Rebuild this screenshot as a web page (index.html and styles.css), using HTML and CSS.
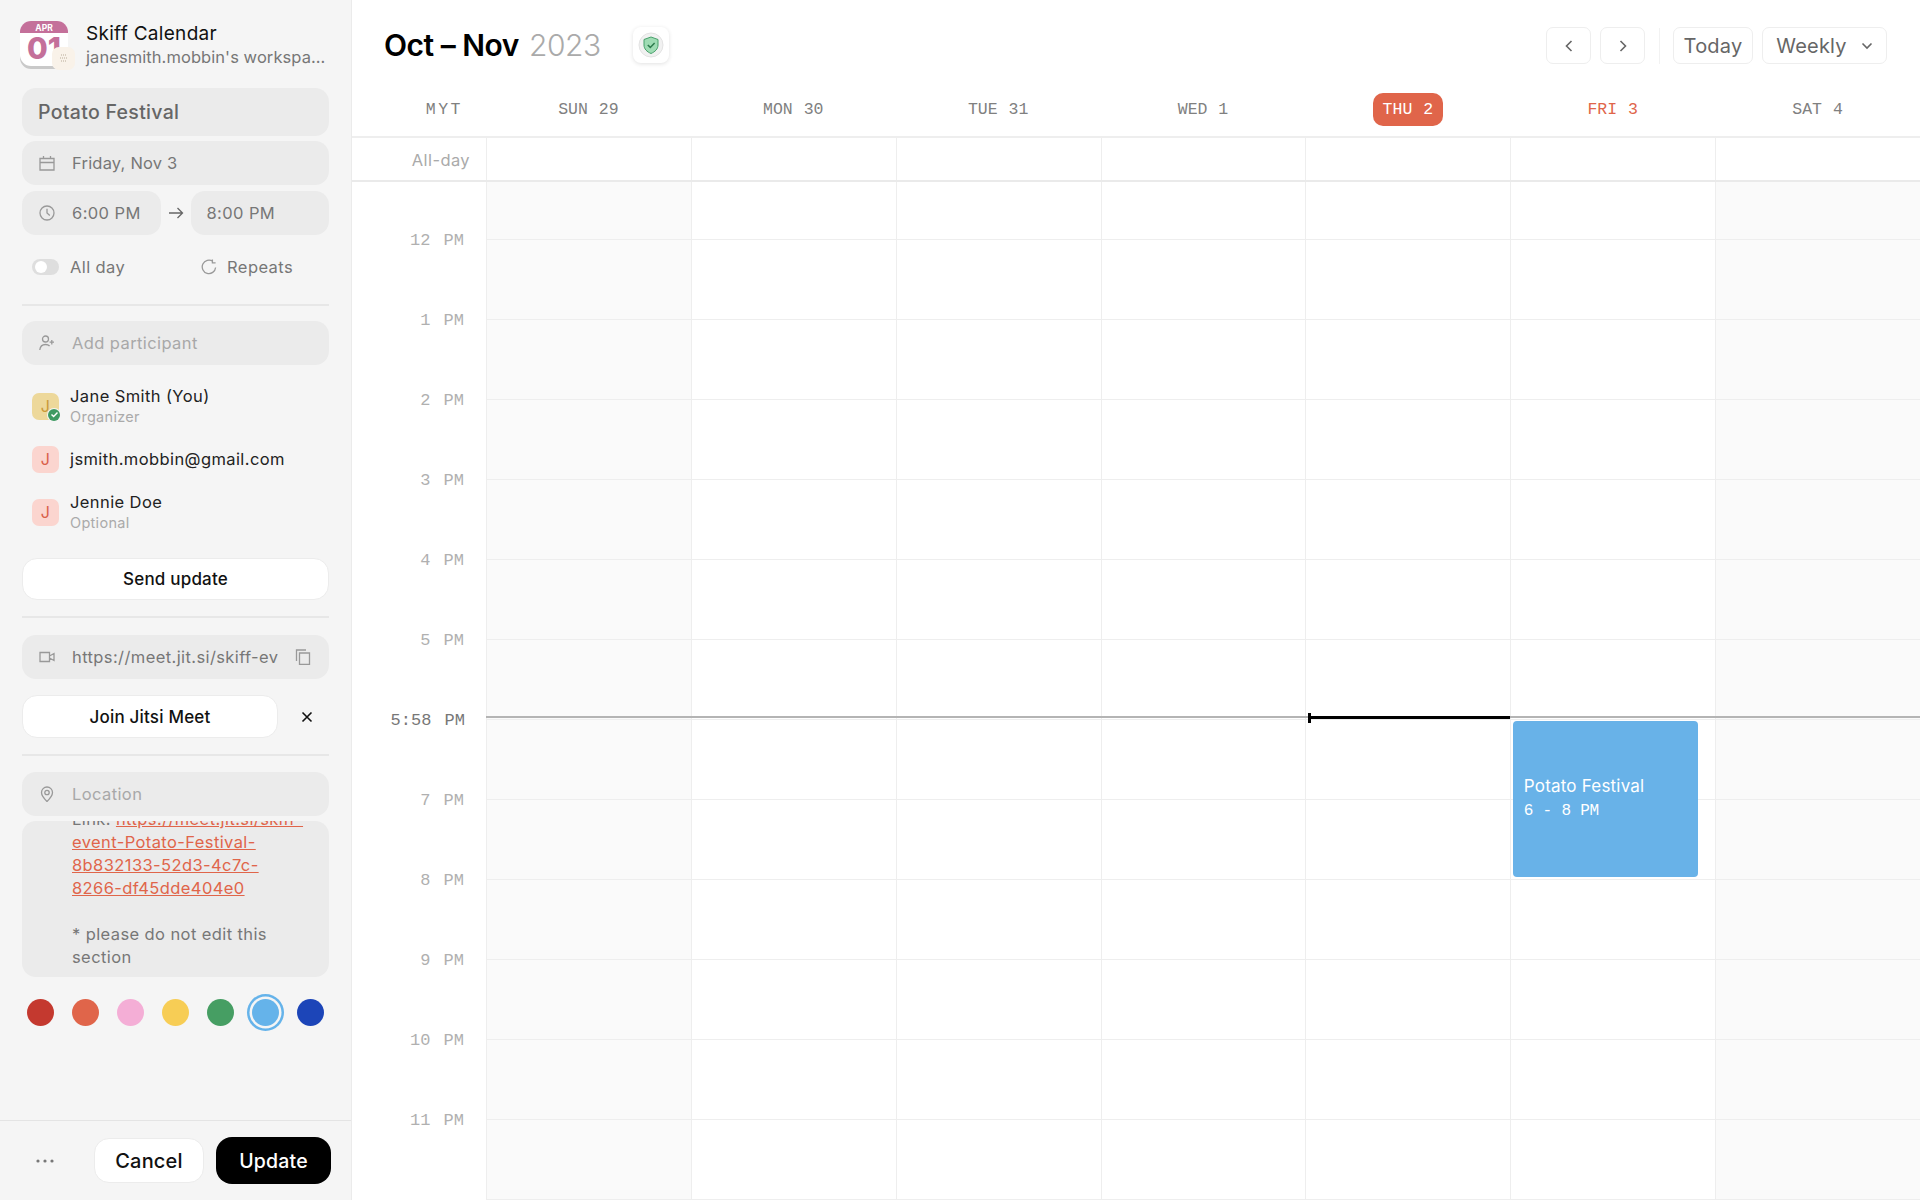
FILE: index.html
```html
<!DOCTYPE html>
<html lang="en">
<head>
    <meta charset="UTF-8">
    <title>Skiff Calendar</title>
    <link rel="stylesheet" href="styles.css">
</head>
<body>

    <!-- Event editor -->
    <aside class="sidebar">
        <div class="panel">
            <div class="brand">
                <div class="logo">
                    <svg width="48" height="48" viewBox="0 0 48 48">
                        <rect x="0" y="2" width="48" height="46" rx="11" fill="#c9c9c9"/>
                        <rect x="0" y="0" width="48" height="45" rx="11" fill="#fff"/>
                        <path d="M0 12V11A11 11 0 0 1 11 0H37A11 11 0 0 1 48 11V12Z" fill="#c4709a"/>
                        <text x="24" y="9.5" class="logo-month">APR</text>
                        <text x="24" y="38" class="logo-day">01</text>
                    </svg>
                    <span class="logo-badge">
                        <svg width="12" height="12" viewBox="0 0 12 12"><path d="M3 3H9M2 6H10M3 9H9" stroke="#b8ab98" stroke-width="1" stroke-dasharray="1 1"/></svg>
                    </span>
                </div>
                <div class="brand-text">
                    <div class="brand-name">Skiff Calendar</div>
                    <div class="brand-sub">janesmith.mobbin's workspa...</div>
                </div>
            </div>

            <div class="field field-title">Potato Festival</div>
            <div class="field field-date">
                <svg class="icon" viewBox="0 0 16 16"><path d="M1 3.5H15V15H1ZM1 7.5H15M4.5 1V3.5M11.5 1V3.5"/></svg>
                <span>Friday, Nov 3</span>
            </div>
            <div class="time-row">
                <div class="field field-time">
                    <svg class="icon" viewBox="0 0 16 16"><circle cx="8" cy="8" r="7"/><path d="M8 3.8V8L10.8 10.6"/></svg>
                    <span>6:00 PM</span>
                </div>
                <svg class="arrow" width="16" height="12" viewBox="0 0 16 12"><path d="M1 6H14.5M9.5 1L14.5 6L9.5 11"/></svg>
                <div class="field field-time field-end"><span>8:00 PM</span></div>
            </div>
            <div class="options">
                <div class="option">
                    <span class="toggle"><span class="toggle-knob"></span></span>
                    <span>All day</span>
                </div>
                <div class="option option-repeat">
                    <svg class="icon" viewBox="0 0 16 16"><path d="M14.6 8.5A6.7 6.7 0 1 1 11.8 2.4M11.4 0.6V3.8H14.6"/></svg>
                    <span>Repeats</span>
                </div>
            </div>

            <hr class="rule rule-first">

            <div class="field field-muted">
                <svg class="icon" viewBox="0 0 16 16"><circle cx="6.5" cy="4" r="3"/><path d="M0.8 15C1.2 11 3.5 9.5 6.5 9.5C8.2 9.5 9.6 10 10.6 11M12.8 5V9.4M10.6 7.2H15"/></svg>
                <span>Add participant</span>
            </div>

            <div class="people">
                <div class="person">
                    <div class="avatar avatar-gold">J<span class="avatar-check"><svg width="9" height="9" viewBox="0 0 9 9"><path d="M1.5 4.6L3.6 6.6L7.5 2.6" fill="none" stroke="#fff" stroke-width="1.4"/></svg></span></div>
                    <div>
                        <div class="person-name">Jane Smith (You)</div>
                        <div class="person-role">Organizer</div>
                    </div>
                </div>
                <div class="person">
                    <div class="avatar">J</div>
                    <div class="person-name">jsmith.mobbin@gmail.com</div>
                </div>
                <div class="person">
                    <div class="avatar">J</div>
                    <div>
                        <div class="person-name">Jennie Doe</div>
                        <div class="person-role">Optional</div>
                    </div>
                </div>
            </div>

            <button class="btn-white btn-send">Send update</button>
            <hr class="rule rule-send">

            <div class="field field-link">
                <svg class="icon" viewBox="0 0 16 16"><path d="M1 3.5H10.5V12.5H1ZM10.5 7L15 4.5V11.5L10.5 9"/></svg>
                <span class="link-text">https://meet.jit.si/skiff-ev</span>
                <svg class="icon icon-copy" viewBox="0 0 16 16"><path d="M4.5 4H14.5V15.5H4.5ZM1.5 12V1H11"/></svg>
            </div>
            <div class="join-row">
                <button class="btn-white btn-join">Join Jitsi Meet</button>
                <svg class="close" width="12" height="12" viewBox="0 0 12 12"><path d="M1.5 1.5L10.5 10.5M10.5 1.5L1.5 10.5"/></svg>
            </div>
            <hr class="rule rule-join">

            <div class="field field-muted">
                <svg class="icon" viewBox="0 0 16 16"><path d="M8 15.5C5 12.5 2.5 9.8 2.5 6.5A5.5 5.5 0 0 1 13.5 6.5C13.5 9.8 11 12.5 8 15.5Z"/><circle cx="8" cy="6.5" r="2.2"/></svg>
                <span>Location</span>
            </div>

            <div class="description">
                <div>Link: <a href="#">https://meet.jit.si/skiff-<br>event-Potato-Festival-<br>8b832133-52d3-4c7c-<br>8266-df45dde404e0</a><br><br>* please do not edit this<br>section</div>
            </div>

            <div class="colors">
                <span class="dot dot-red"></span>
                <span class="dot dot-orange"></span>
                <span class="dot dot-pink"></span>
                <span class="dot dot-yellow"></span>
                <span class="dot dot-green"></span>
                <span class="dot dot-sky selected"></span>
                <span class="dot dot-blue"></span>
            </div>
        </div>

        <div class="panel-foot">
            <svg class="more" width="18" height="4" viewBox="0 0 18 4"><circle cx="2" cy="2" r="1.6"/><circle cx="9" cy="2" r="1.6"/><circle cx="16" cy="2" r="1.6"/></svg>
            <button class="btn-white btn-cancel">Cancel</button>
            <button class="btn-update">Update</button>
        </div>
    </aside>

    <!-- Calendar -->
    <main class="calendar">
        <header class="topbar">
            <h1 class="month">Oct – Nov <span class="year">2023</span></h1>
            <div class="shield">
                <svg width="26" height="26" viewBox="0 0 26 26">
                    <circle cx="13" cy="13" r="12" fill="#f1f1f1" stroke="#e3e3e3"/>
                    <path d="M13 5L20 7.5V13C20 17 17 19.8 13 21.5C9 19.8 6 17 6 13V7.5Z" fill="#9fdcb4" stroke="#46a06a" stroke-width="1"/>
                    <path d="M9.8 13L12.3 15.4L16.6 11" fill="none" stroke="#2c7a4c" stroke-width="1.5"/>
                </svg>
            </div>
            <div class="tools">
                <button class="tool tool-icon"><svg width="10" height="14" viewBox="0 0 10 14"><path d="M7.5 2L2.5 7L7.5 12"/></svg></button>
                <button class="tool tool-icon"><svg width="10" height="14" viewBox="0 0 10 14"><path d="M2.5 2L7.5 7L2.5 12"/></svg></button>
                <span class="tools-sep"></span>
                <button class="tool tool-today">Today</button>
                <button class="tool tool-weekly">Weekly <svg width="12" height="8" viewBox="0 0 12 8"><path d="M1.5 1.5L6 6L10.5 1.5"/></svg></button>
            </div>
        </header>

        <div class="week-head">
            <div class="head-zone">MYT</div>
            <div class="head-day">SUN 29</div>
            <div class="head-day">MON 30</div>
            <div class="head-day">TUE 31</div>
            <div class="head-day">WED 1</div>
            <div class="head-day"><span class="today-pill">THU 2</span></div>
            <div class="head-day head-selected">FRI 3</div>
            <div class="head-day">SAT 4</div>
        </div>

        <div class="allday-row">
            <div class="allday-label">All-day</div>
            <div class="allday-cell"></div>
            <div class="allday-cell"></div>
            <div class="allday-cell"></div>
            <div class="allday-cell"></div>
            <div class="allday-cell"></div>
            <div class="allday-cell"></div>
            <div class="allday-cell"></div>
        </div>

        <div class="week-body">
            <div class="hours">
                <div class="hour">12 PM</div>
                <div class="hour">1 PM</div>
                <div class="hour">2 PM</div>
                <div class="hour">3 PM</div>
                <div class="hour">4 PM</div>
                <div class="hour">5 PM</div>
                <div class="hour hour-now">5:58 PM</div>
                <div class="hour">7 PM</div>
                <div class="hour">8 PM</div>
                <div class="hour">9 PM</div>
                <div class="hour">10 PM</div>
                <div class="hour">11 PM</div>
            </div>
            <div class="day day-off"></div>
            <div class="day"></div>
            <div class="day"></div>
            <div class="day"></div>
            <div class="day"><div class="now-today"></div></div>
            <div class="day">
                <div class="event">
                    <div>Potato Festival</div>
                    <div class="event-time">6 - 8 PM</div>
                </div>
            </div>
            <div class="day day-off"></div>
            <div class="now-line"></div>
        </div>
    </main>

</body>
</html>
```

FILE: styles.css
```css
* { box-sizing: border-box; }
html, body { height: 100%; }
body { margin: 0; display: flex; height: 1200px; overflow: hidden; background: #fff; color: #111; font-family: Inter, "Noto Sans", sans-serif; font-size: 16.5px; letter-spacing: 0.4px; }
button { font-family: inherit; cursor: pointer; }
svg { display: block; flex-shrink: 0; }

/* Sidebar */
.sidebar { width: 352px; flex-shrink: 0; display: flex; flex-direction: column; background: #f5f5f5; border-right: 1px solid #ebebeb; }
.panel { flex: 1; padding: 0 22px; }
.brand { height: 88px; display: flex; align-items: center; margin-left: -2px; padding-top: 1px; gap: 18px; }
.logo { position: relative; width: 48px; height: 48px; flex-shrink: 0; }
.logo-month { fill: #fff; font-size: 8.5px; font-weight: 700; text-anchor: middle; letter-spacing: 0; }
.logo-day { fill: #c4709a; font-size: 30px; font-weight: 800; text-anchor: middle; letter-spacing: 0; }
.logo-badge { position: absolute; left: 32px; top: 26px; width: 23px; height: 23px; border-radius: 7px; background: #f9f2e9; display: flex; align-items: center; justify-content: center; }
.brand-text { min-width: 0; }
.brand-name { font-size: 19px; line-height: 25px; letter-spacing: 0.3px; color: #111; }
.brand-sub { font-size: 16.5px; line-height: 23px; letter-spacing: 0.07px; color: #777; white-space: nowrap; }

.field { height: 44px; display: flex; align-items: center; gap: 17px; padding: 0 17px; background: #ebebeb; border-radius: 14px; color: #777; margin-bottom: 6px; }
.field-title { height: 48px; margin-bottom: 5px; font-size: 19.5px; font-weight: 500; letter-spacing: 0.3px; color: #666; padding-left: 16px; }
.field-date { letter-spacing: 0.2px; }
.field-muted { color: #a8a8a8; margin-bottom: 0; }
.icon { width: 16px; height: 16px; fill: none; stroke: #999; stroke-width: 1.3; }
.time-row { display: flex; align-items: center; }
.field-time { width: 139px; margin-bottom: 0; }
.field-end { padding-left: 16px; }
.arrow { margin: 0 7px; fill: none; stroke: #666; stroke-width: 1.3; }

.options { display: flex; align-items: center; justify-content: space-between; height: 32px; margin-top: 16px; padding: 0 36px 0 10px; color: #777; }
.option { display: flex; align-items: center; gap: 11px; }
.option-repeat { gap: 10px; }
.toggle { width: 27px; height: 16px; border-radius: 8px; background: #dedede; padding: 2px 0 0 3px; }
.toggle-knob { display: block; width: 12px; height: 12px; border-radius: 50%; background: #fff; }

.rule { border: none; height: 2px; background: #e7e7e7; margin: 0; }
.rule-first { margin-top: 21px; margin-bottom: 15px; }
.rule-send { margin-top: 16px; margin-bottom: 17px; }
.rule-join { margin-top: 16px; margin-bottom: 16px; }

.people { display: flex; flex-direction: column; gap: 9px; margin: 19px 0 24px; padding-left: 10px; }
.person { display: flex; align-items: center; gap: 11px; min-height: 44px; }
.avatar { position: relative; width: 27px; height: 27px; border-radius: 7px; background: #fbd5cf; color: #d9604a; display: flex; align-items: center; justify-content: center; font-size: 16px; flex-shrink: 0; }
.avatar-gold { background: #edd89a; color: #c99a3a; }
.avatar-check { position: absolute; right: -1px; bottom: -1px; width: 12px; height: 12px; border-radius: 50%; background: #3f9a62; display: flex; align-items: center; justify-content: center; box-shadow: 0 0 0 1px #f5f5f5; }
.person-name { line-height: 22px; color: #222; }
.person-role { font-size: 14.5px; line-height: 20px; letter-spacing: 0.3px; color: #aaa; }

.btn-white { background: #fff; border: 1px solid #ececec; border-radius: 15px; color: #111; font-size: 17px; font-weight: 500; letter-spacing: 0.2px; }
.btn-send { display: block; width: 100%; height: 42px; }
.field-link { margin-bottom: 16px; gap: 17px; }
.link-text { flex: 1; white-space: nowrap; overflow: hidden; }
.icon-copy { margin-right: 1px; }
.join-row { display: flex; align-items: center; }
.btn-join { width: 256px; height: 43px; }
.close { margin-left: 23px; fill: none; stroke: #111; stroke-width: 1.6; }

.description { height: 156px; margin-top: 5px; padding: 0 17px 8px 50px; background: #ebebeb; border-radius: 14px; overflow: hidden; display: flex; flex-direction: column; justify-content: flex-end; line-height: 23px; color: #777; }
.description a { color: #e0654a; }

.colors { display: flex; gap: 18px; margin-top: 22px; padding-left: 5px; }
.dot { width: 27px; height: 27px; border-radius: 50%; }
.dot-red { background: #c4392f; }
.dot-orange { background: #e0654a; }
.dot-pink { background: #f4aed6; }
.dot-yellow { background: #f7cd55; }
.dot-green { background: #469e63; }
.dot-sky { background: #65b3ea; }
.dot-blue { background: #1c45b8; }
.selected { box-shadow: 0 0 0 2.5px #f5f5f5, 0 0 0 5px #65b3ea; }

.panel-foot { height: 80px; display: flex; align-items: center; padding: 0 20px 0 36px; border-top: 1px solid #e4e4e4; }
.more { fill: #777; }
.btn-cancel { width: 110px; height: 45px; margin-left: 40px; font-size: 20px; }
.btn-update { width: 115px; height: 47px; margin-left: 12px; background: #000; color: #fff; border: none; border-radius: 16px; font-size: 19.5px; font-weight: 500; letter-spacing: 0.2px; }

/* Calendar */
.calendar { flex: 1; min-width: 0; display: flex; flex-direction: column; }
.topbar { height: 90px; display: flex; align-items: center; padding: 0 33px 0 32px; flex-shrink: 0; }
.month { margin: 0; font-size: 30px; font-weight: 600; letter-spacing: -0.5px; color: #000; }
.year { margin-left: 3px; font-weight: 300; color: #aaa; letter-spacing: -0.4px; }
.shield { width: 36px; height: 36px; margin-left: 32px; border-radius: 8px; background: #fff; box-shadow: 0 1px 4px rgba(0,0,0,0.12); display: flex; align-items: center; justify-content: center; }
.tools { display: flex; align-items: center; margin-left: auto; padding-top: 1px; }
.tool { height: 37px; background: #fff; border: 1.5px solid #eee; border-radius: 7px; color: #666; font-size: 20px; letter-spacing: 0.2px; display: flex; align-items: center; justify-content: center; padding: 0; }
.tool svg { fill: none; stroke: #666; stroke-width: 1.6; }
.tool-icon { width: 45px; margin-right: 9px; }
.tools-sep { width: 1px; height: 36px; background: #f2f2f2; margin: 0 13px 0 5px; }
.tool-today { width: 80px; margin-right: 9px; }
.tool-weekly { width: 125px; gap: 14px; }

.week-head, .allday-row, .week-body { display: grid; grid-template-columns: 134px repeat(7, 1fr); flex-shrink: 0; }
.week-head { height: 48px; align-items: center; padding-bottom: 7px; border-bottom: 2px solid #eee; font-family: "Liberation Mono", monospace; font-size: 16.5px; letter-spacing: 0; word-spacing: 1px; color: #808080; }
.head-zone { text-align: right; padding-right: 23px; letter-spacing: 2.5px; }
.head-day { text-align: center; }
.head-selected { color: #e0654a; }
.today-pill { display: inline-block; padding: 0 10px; line-height: 33px; background: #e0654a; color: #fff; border-radius: 10px; }

.allday-row { height: 44px; border-bottom: 2px solid #eaeaea; }
.allday-label { text-align: right; padding: 12px 16px 0 0; color: #aaa; }
.allday-cell { border-left: 1.5px solid #eee; }

.week-body { position: relative; flex: 1; min-height: 0; overflow: hidden; }
.hours { padding-top: 19px; font-family: "Liberation Mono", monospace; font-size: 17px; letter-spacing: 0; word-spacing: 3px; color: #b0b0b0; text-align: right; }
.hour { height: 80px; line-height: 80px; padding-right: 22px; }
.hour-now { color: #777; padding-right: 21px; }
.day { position: relative; border-left: 1.5px solid #eee; background-image: linear-gradient(#eee 1.5px, transparent 1.5px); background-size: 100% 80px; background-position: 0 57px; }
.day-off { background-color: #fafafa; }

.now-line { position: absolute; left: 134px; right: 0; top: 534px; height: 2px; background: #b4b4b4; }
.now-today { position: absolute; z-index: 1; left: 2px; right: 0; top: 534px; height: 3px; background: #000; }
.now-today::before { content: ""; position: absolute; left: 0; top: -3px; width: 2.5px; height: 10px; background: #000; }
.event { position: absolute; left: 1.5px; right: 17px; top: 539px; height: 156px; padding: 53px 11px 0; background: #68b2e8; border-radius: 4px; color: #fff; font-size: 17px; letter-spacing: 0.2px; line-height: 24.5px; }
.event-time { font-family: "Liberation Mono", monospace; font-size: 16px; letter-spacing: -0.2px; }
```
